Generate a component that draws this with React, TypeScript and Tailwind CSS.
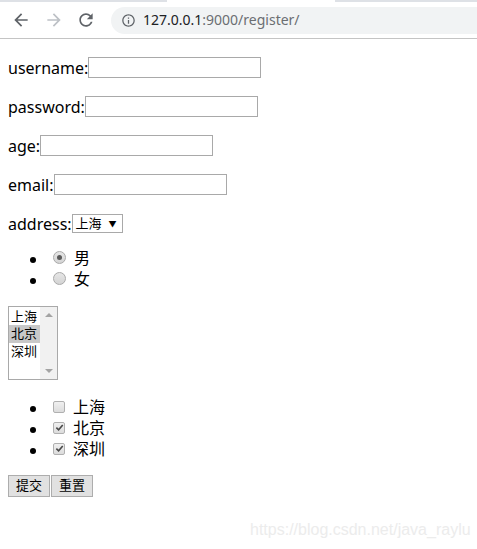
import React from 'react';

const pageFont = { fontFamily: '"Noto Sans", "Noto Sans CJK SC", sans-serif' };

function Radio({ checked }: { checked?: boolean }) {
  return (
    <span className="inline-flex w-[13px] h-[13px] rounded-full border border-[#a9a9a9] bg-gradient-to-b from-[#e6e6e6] to-[#d4d4d4] items-center justify-center">
      {checked && <span className="w-[5px] h-[5px] rounded-full bg-[#5a5a5a]" />}
    </span>
  );
}

function Checkbox({ checked }: { checked?: boolean }) {
  return (
    <span className="inline-flex w-[12px] h-[12px] rounded-[2px] border border-[#b0b0b0] bg-gradient-to-b from-[#f0f0f0] to-[#dcdcdc] items-center justify-center">
      {checked && (
        <svg viewBox="0 0 10 10" className="w-[9px] h-[9px]">
          <path d="M1.5 5.2 L4 7.6 L8.6 2.2" fill="none" stroke="#4a4a4a" strokeWidth={1.8} />
        </svg>
      )}
    </span>
  );
}

function Field({ label }: { label: string }) {
  return (
    <div className="flex items-center h-[23px]">
      <span className="text-[16px] text-black">{label}:</span>
      <span className="w-[173px] h-[21px] border border-[#a9a9a9] bg-white" />
    </div>
  );
}

export default function App() {
  return (
    <div className="relative w-[477px] h-[549px] bg-white overflow-hidden">
      {/* Browser toolbar */}
      <div className="h-[2px] flex">
        <div className="w-[167px] bg-[#dee1e6]" />
        <div className="w-[168px] bg-white" />
        <div className="flex-1 bg-[#dee1e6]" />
      </div>
      <div className="h-[37px] flex items-center border-b border-[#c4c4c4] bg-white">
        <svg viewBox="0 0 24 24" className="w-[20px] h-[20px] ml-[11px]" fill="#5f6368">
          <path d="M20 11H7.83l5.59-5.59L12 4l-8 8 8 8 1.41-1.41L7.83 13H20v-2z" />
        </svg>
        <svg viewBox="0 0 24 24" className="w-[20px] h-[20px] ml-[13px]" fill="#bdc1c6">
          <path d="M12 4l-1.41 1.41L16.17 11H4v2h12.17l-5.58 5.59L12 20l8-8z" />
        </svg>
        <svg viewBox="0 0 24 24" className="w-[20px] h-[20px] ml-[12px]" fill="#5f6368">
          <path d="M17.65 6.35C16.2 4.9 14.21 4 12 4c-4.42 0-7.99 3.58-7.99 8s3.57 8 7.99 8c3.73 0 6.84-2.55 7.73-6h-2.08c-.82 2.33-3.04 4-5.65 4-3.31 0-6-2.69-6-6s2.69-6 6-6c1.66 0 3.14.69 4.22 1.78L13 11h7V4l-2.35 2.35z" />
        </svg>
        <div className="ml-[15px] flex-1 h-[27px] rounded-l-full bg-[#f1f3f4] flex items-center">
          <svg viewBox="0 0 24 24" className="w-[15px] h-[15px] ml-[10px]" fill="#5f6368">
            <path d="M11 7h2v2h-2zm0 4h2v6h-2zm1-9C6.48 2 2 6.48 2 12s4.48 10 10 10 10-4.48 10-10S17.52 2 12 2zm0 18c-4.41 0-8-3.59-8-8s3.59-8 8-8 8 3.59 8 8-3.59 8-8 8z" />
          </svg>
          <span className="ml-[7px] text-[14px] leading-none" style={{ fontFamily: '"Noto Sans", sans-serif' }}>
            <span className="text-[#202124]">127.0.0.1</span>
            <span className="text-[#6b6e72]">:9000/register/</span>
          </span>
        </div>
      </div>

      {/* Page */}
      <div className="pl-2 flex flex-col" style={pageFont}>
        <div className="mt-[17px] flex flex-col gap-[16px]">
          <Field label="username" />
          <Field label="password" />
          <Field label="age" />
          <Field label="email" />
          <div className="flex items-center h-[23px]">
            <span className="text-[16px]">address:</span>
            <span className="w-[51px] h-[19px] border border-[#a9a9a9] bg-white flex items-center justify-between pl-[3px] pr-[5px] text-[13px] leading-none">
              <span>上海</span>
              <span className="text-[8px]">▼</span>
            </span>
          </div>
        </div>

        <ul className="list-disc pl-10 mt-[12px] text-[16px]">
          <li className="h-[21px]">
            <span className="inline-flex items-center h-[21px] align-top">
              <span className="ml-[5px] mr-[8px] inline-flex"><Radio checked /></span>
              男
            </span>
          </li>
          <li className="h-[21px]">
            <span className="inline-flex items-center h-[21px] align-top">
              <span className="ml-[5px] mr-[8px] inline-flex"><Radio /></span>
              女
            </span>
          </li>
        </ul>

        <div className="mt-[17px] w-[50px] h-[74px] border border-[#a9a9a9] flex text-[13px] leading-[17px]">
          <div className="w-[31px] pt-[1px]">
            <div className="pl-[2px] h-[17px]">上海</div>
            <div className="pl-[2px] h-[18px] bg-[#c8c8c8]">北京</div>
            <div className="pl-[2px] h-[17px]">深圳</div>
          </div>
          <div className="w-[17px] bg-[#f1f1f1] flex flex-col justify-between items-center py-[6px]">
            <span className="w-0 h-0 border-l-[4px] border-r-[4px] border-b-[4px] border-l-transparent border-r-transparent border-b-[#a3a3a3]" />
            <span className="w-0 h-0 border-l-[4px] border-r-[4px] border-t-[4px] border-l-transparent border-r-transparent border-t-[#a3a3a3]" />
          </div>
        </div>

        <ul className="list-disc pl-10 mt-[16px] text-[16px]">
          {[
            ['上海', false],
            ['北京', true],
            ['深圳', true],
          ].map(([city, on]) => (
            <li key={city as string} className="h-[21px]">
              <span className="inline-flex items-center h-[21px] align-top">
                <span className="ml-[5px] mr-[8px] inline-flex"><Checkbox checked={on as boolean} /></span>
                {city as string}
              </span>
            </li>
          ))}
        </ul>

        <div className="mt-[16px] flex gap-[1px]">
          <span className="w-[42px] h-[22px] border border-[#adadad] bg-[#e1e1e1] text-[13px] flex items-center justify-center">提交</span>
          <span className="w-[42px] h-[22px] border border-[#adadad] bg-[#e1e1e1] text-[13px] flex items-center justify-center">重置</span>
        </div>
      </div>

      {/* Watermark */}
      <span
        className="absolute left-[250px] top-[518px] text-[16px] text-[#ececec]"
        style={{ fontFamily: '"Liberation Sans", Arial, sans-serif' }}
      >
        https://blog.csdn.net/java_raylu
      </span>
    </div>
  );
}
